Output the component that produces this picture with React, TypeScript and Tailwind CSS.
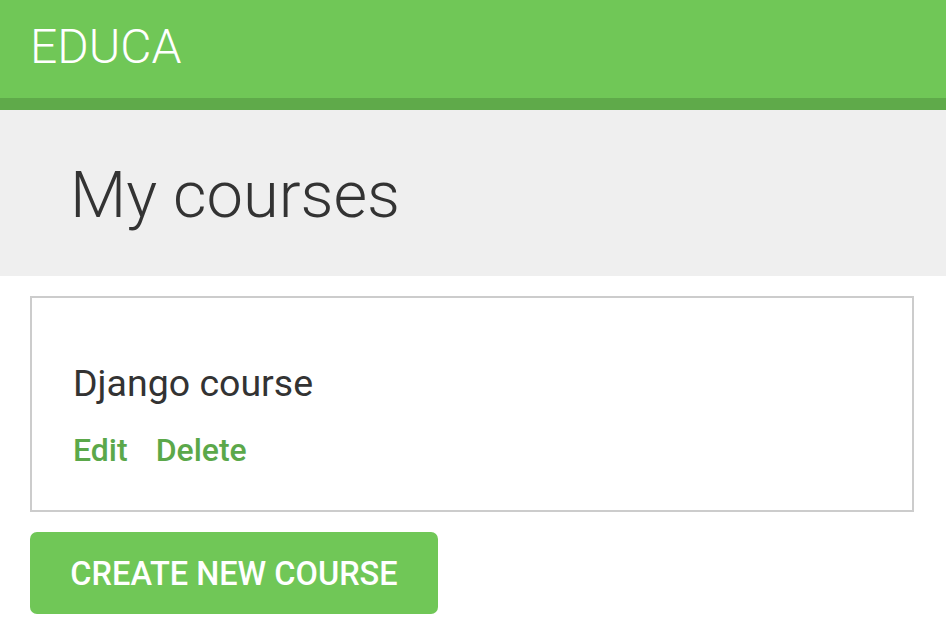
export default function App() {
  return (
    <div className="min-h-[644px] bg-white font-['Roboto',sans-serif]">
      <div className="bg-[#70c757] h-[98px] flex items-center px-[30px]">
        <h1 className="text-white text-[48px] font-light leading-none mt-[-4px]">EDUCA</h1>
      </div>
      <div className="bg-[#5faa4a] h-[12px]" />
      <div className="bg-[#efefef] h-[166px] flex items-center px-[70px]">
        <h2 className="text-[#333] text-[65px] font-light leading-none mt-[4px]">My courses</h2>
      </div>
      <div className="px-[30px] pt-[20px]">
        <div className="w-[884px] h-[216px] border-2 border-[#ccc] px-[41px] pt-[67px]">
          <h3 className="text-[#333] text-[37.5px] font-normal leading-none">Django course</h3>
          <div className="flex gap-[28px] mt-[31px] text-[#5ba84a] text-[32px] font-medium leading-none">
            <a href="#">Edit</a>
            <a href="#">Delete</a>
          </div>
        </div>
        <button className="mt-[20px] w-[408px] h-[82px] bg-[#70c757] rounded-[7px] text-white text-[32.5px] font-medium leading-none pt-[3px]">
          CREATE NEW COURSE
        </button>
      </div>
    </div>
  );
}
